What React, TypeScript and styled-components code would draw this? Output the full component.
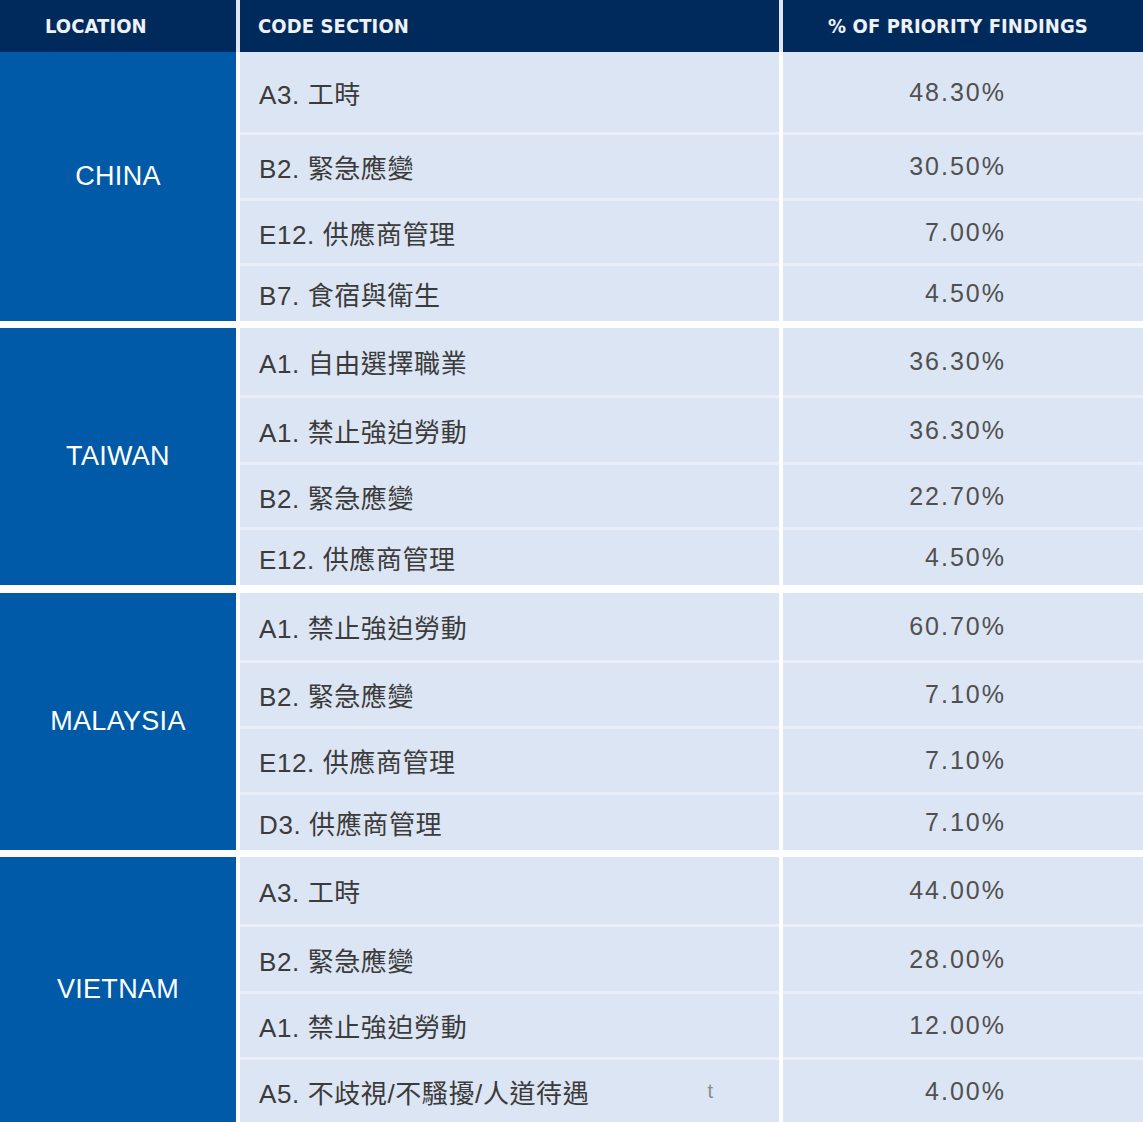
import React from "react";
import styled, { createGlobalStyle } from "styled-components";

const GlobalStyle = createGlobalStyle`
  html, body {
    margin: 0;
    padding: 0;
    background: #ffffff;
  }
  body {
    font-family: "Liberation Sans", "Noto Sans CJK TC", sans-serif;
  }
`;

const Table = styled.div`
  width: 1143px;
  height: 1122px;
  overflow: hidden;
  display: flex;
  flex-direction: column;
  background: #ffffff;
`;

const HeaderRow = styled.div`
  display: grid;
  grid-template-columns: 236px 539px 1fr;
  column-gap: 4px;
  height: 52px;
  background: #dfe6f0;
`;

const HeaderCell = styled.div<{ $pad: number }>`
  background: #002a5c;
  color: #eef1f6;
  display: flex;
  align-items: center;
  padding-left: ${(p) => p.$pad}px;
  font-family: "DejaVu Sans Condensed", "DejaVu Sans", sans-serif;
  font-stretch: condensed;
  font-weight: 700;
  font-size: 20px;
  letter-spacing: 0.1px;
  text-transform: uppercase;
`;

const Group = styled.div<{ $gap: number }>`
  display: grid;
  grid-template-columns: 236px 539px 1fr;
  column-gap: 4px;
  margin-top: ${(p) => p.$gap}px;
`;

const LocationCell = styled.div<{ $rows: number; $shift: number }>`
  grid-column: 1;
  grid-row: 1 / span ${(p) => p.$rows};
  background: #005aa7;
  color: #ffffff;
  display: flex;
  align-items: center;
  justify-content: center;
  font-size: 27px;
  letter-spacing: 0.3px;
  padding-bottom: ${(p) => p.$shift}px;
`;

const CodeCell = styled.div<{ $h: number; $first: boolean }>`
  grid-column: 2;
  height: ${(p) => p.$h}px;
  box-sizing: border-box;
  background: #dce5f3;
  border-top: ${(p) => (p.$first ? "0" : "3px solid #e9eef8")};
  display: flex;
  align-items: center;
  padding-left: 19px;
  color: #3b3b3b;
  font-size: 26px;
  letter-spacing: 0.6px;
`;

const PctCell = styled.div<{ $h: number; $first: boolean }>`
  grid-column: 3;
  height: ${(p) => p.$h}px;
  box-sizing: border-box;
  background: #dce5f3;
  border-top: ${(p) => (p.$first ? "0" : "3px solid #e9eef8")};
  display: flex;
  align-items: center;
  justify-content: flex-end;
  padding-right: 137px;
  color: #505050;
  font-size: 25px;
  letter-spacing: 2px;
`;

const Stray = styled.span`
  margin-left: auto;
  margin-right: 66px;
  font-size: 20px;
  letter-spacing: 0;
  color: #8a8a8a;
`;

type Row = { code: string; pct: string; h: number; stray?: string };
type Loc = { name: string; gap: number; shift: number; rows: Row[] };

const data: Loc[] = [
  {
    name: "CHINA",
    gap: 0,
    shift: 20,
    rows: [
      { code: "A3. 工時", pct: "48.30%", h: 80 },
      { code: "B2. 緊急應變", pct: "30.50%", h: 66 },
      { code: "E12. 供應商管理", pct: "7.00%", h: 65 },
      { code: "B7. 食宿與衛生", pct: "4.50%", h: 58 },
    ],
  },
  {
    name: "TAIWAN",
    gap: 7,
    shift: 0,
    rows: [
      { code: "A1. 自由選擇職業", pct: "36.30%", h: 67 },
      { code: "A1. 禁止強迫勞動", pct: "36.30%", h: 67 },
      { code: "B2. 緊急應變", pct: "22.70%", h: 65 },
      { code: "E12. 供應商管理", pct: "4.50%", h: 58 },
    ],
  },
  {
    name: "MALAYSIA",
    gap: 8,
    shift: 0,
    rows: [
      { code: "A1. 禁止強迫勞動", pct: "60.70%", h: 67 },
      { code: "B2. 緊急應變", pct: "7.10%", h: 66 },
      { code: "E12. 供應商管理", pct: "7.10%", h: 66 },
      { code: "D3. 供應商管理", pct: "7.10%", h: 58 },
    ],
  },
  {
    name: "VIETNAM",
    gap: 7,
    shift: 0,
    rows: [
      { code: "A3. 工時", pct: "44.00%", h: 67 },
      { code: "B2. 緊急應變", pct: "28.00%", h: 67 },
      { code: "A1. 禁止強迫勞動", pct: "12.00%", h: 66 },
      { code: "A5. 不歧視/不騷擾/人道待遇", pct: "4.00%", h: 65, stray: "t" },
    ],
  },
];

export default function App() {
  return (
    <>
      <GlobalStyle />
      <Table>
        <HeaderRow>
          <HeaderCell $pad={45}>Location</HeaderCell>
          <HeaderCell $pad={18}>Code Section</HeaderCell>
          <HeaderCell $pad={45}>% of Priority Findings</HeaderCell>
        </HeaderRow>
        {data.map((loc) => (
          <Group key={loc.name} $gap={loc.gap}>
            <LocationCell $rows={loc.rows.length} $shift={loc.shift}>
              {loc.name}
            </LocationCell>
            {loc.rows.map((r, i) => (
              <React.Fragment key={i}>
                <CodeCell $h={r.h} $first={i === 0} style={{ gridRow: i + 1 }}>
                  {r.code}
                  {r.stray && <Stray>{r.stray}</Stray>}
                </CodeCell>
                <PctCell $h={r.h} $first={i === 0} style={{ gridRow: i + 1 }}>
                  {r.pct}
                </PctCell>
              </React.Fragment>
            ))}
          </Group>
        ))}
      </Table>
    </>
  );
}
